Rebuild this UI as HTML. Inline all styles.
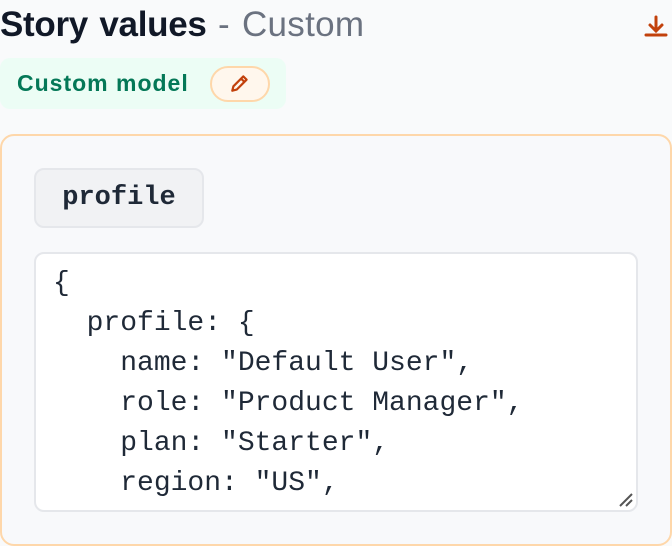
<!DOCTYPE html>
<html><head><style>
body{margin:0;width:672px;height:546px;background:#f9fafb;font-family:"Liberation Sans",sans-serif;position:relative;overflow:hidden}
.t{position:absolute;left:0;top:5px;font-size:35px;font-weight:bold;color:#111827;letter-spacing:-0.3px;word-spacing:2px;white-space:nowrap}
.t span{font-weight:normal;color:#6b7280;letter-spacing:0.3px}
.dl{position:absolute;left:644px;top:15px}
.badge{position:absolute;left:0;top:58px;width:286px;height:51px;background:#ecfdf5;border-radius:10px}
.badge b{position:absolute;left:17px;top:12px;font-size:23px;color:#047857;letter-spacing:1px}
.pen{position:absolute;left:210px;top:8px;width:56px;height:32px;background:#fff7ed;border:2px solid #fed7aa;border-radius:18px}
.panel{position:absolute;left:0;top:134px;width:668px;height:408px;border:2px solid #fed7aa;border-radius:14px;background:#f8f9fb}
.tag{position:absolute;left:34px;top:168px;width:166px;height:56px;background:#f1f2f4;border:2px solid #e5e7eb;border-radius:10px;font-family:"Liberation Mono",monospace;font-weight:bold;font-size:27px;color:#1f2937;line-height:56px;text-align:center}
.ta{position:absolute;left:34px;top:252px;width:600px;height:256px;background:#fff;border:2px solid #e5e7eb;border-radius:10px;overflow:hidden}
pre{margin:0;position:absolute;left:17px;top:10px;font-family:"Liberation Mono",monospace;font-size:28px;line-height:40px;color:#1f2937}
</style></head><body>
<div class="t">Story values <span>- Custom</span></div>
<svg class="dl" width="24" height="24" viewBox="0 0 24 24"><path d="M12 2v14M6 10l6 6 6-6M2 20h20" stroke="#c2410c" stroke-width="3" fill="none" stroke-linecap="round"/></svg>
<div class="badge"><b>Custom model</b>
<div class="pen"><svg style="position:absolute;left:17px;top:4px" width="22" height="22" viewBox="0 0 20 20"><path d="M3 17l1-4L13 4l3 3-9 9zM11 6l3 3" stroke="#c2410c" stroke-width="2" fill="none" stroke-linejoin="round"/></svg></div></div>
<div class="panel"></div>
<div class="tag">profile</div>
<div class="ta"><pre>{
  profile: {
    name: "Default User",
    role: "Product Manager",
    plan: "Starter",
    region: "US",</pre>
<svg style="position:absolute;right:2px;bottom:2px" width="16" height="16"><path d="M2 14L14 2M8 14L14 8" stroke="#555" stroke-width="2"/></svg></div>
</body></html>
